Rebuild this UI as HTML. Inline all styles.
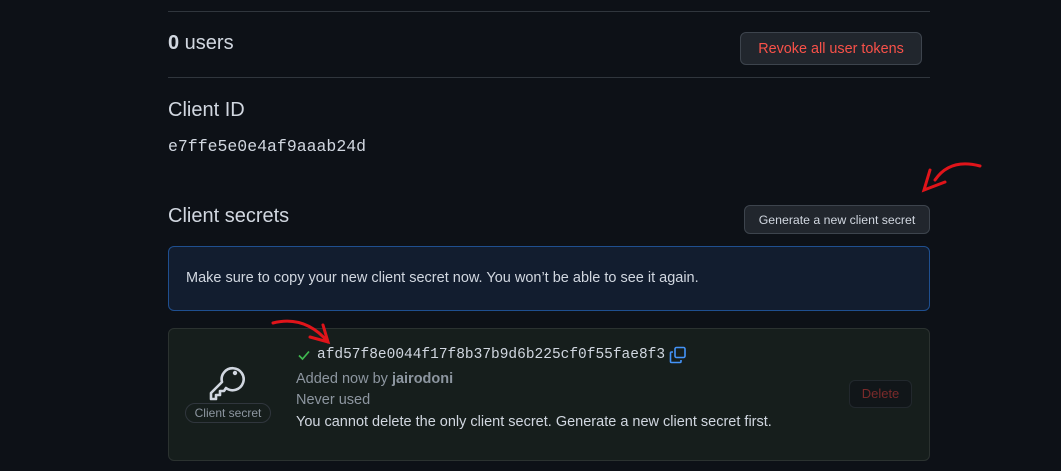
<!DOCTYPE html>
<html><head><meta charset="utf-8"><style>
*{box-sizing:border-box;margin:0;padding:0}
body{width:1061px;height:471px;background:#0d1117;font-family:"Liberation Sans",sans-serif;color:#d1d7e0;position:relative;overflow:hidden}
.abs{position:absolute}
.line{position:absolute;left:168px;width:762px;height:1px;background:#30363d}
.btn{position:absolute;border:1px solid #3d444d;background:#21262d;border-radius:6px;font-size:14.4px;display:flex;align-items:center;justify-content:center}
.mono{font-family:"Liberation Mono",monospace}
</style></head><body>
<div class="line" style="top:11px"></div>
<div class="abs" style="left:168px;top:32px;font-size:20px"><b>0</b> users</div>
<div class="btn" style="left:740px;top:32px;width:182px;height:33px;color:#f85149">Revoke all user tokens</div>
<div class="line" style="top:77px"></div>
<div class="abs" style="left:168px;top:99px;font-size:20px">Client ID</div>
<div class="abs mono" style="left:168px;top:137px;font-size:16.5px">e7ffe5e0e4af9aaab24d</div>
<div class="abs" style="left:168px;top:205px;font-size:20px">Client secrets</div>
<div class="btn" style="left:744px;top:205px;width:186px;height:29px;font-size:12.3px;color:#d1d7e0">Generate a new client secret</div>
<div class="abs" style="left:168px;top:246px;width:762px;height:65px;background:#121d2f;border:1px solid #1f4f8f;border-radius:6px"></div>
<div class="abs" style="left:186px;top:270px;font-size:14.5px">Make sure to copy your new client secret now. You won’t be able to see it again.</div>
<div class="abs" style="left:168px;top:328px;width:762px;height:133px;background:#161e1c;border:1px solid #2b3230;border-radius:6px"></div>
<svg class="abs" style="left:208px;top:362px" width="38" height="40" viewBox="0 0 38 40" fill="none" stroke="#d1d7e0" stroke-width="2.6" stroke-linejoin="round">
<path d="M14 20 L3 31 L3 37 L8 37 L8 33 L12 33 L12 29 L16 29 L18 26 A11 11 0 1 0 14 20 Z"/><circle cx="27" cy="11" r="2.2" fill="#d1d7e0" stroke="none"/></svg>
<div class="abs" style="left:185px;top:403px;width:86px;height:20px;border:1px solid #30363d;border-radius:10px;font-size:12px;color:#8d96a0;text-align:center;line-height:18px">Client secret</div>
<svg class="abs" style="left:297px;top:348px" width="14" height="14" viewBox="0 0 14 14"><path d="M2 7.5 L5.5 11 L12 3.5" stroke="#3fb950" stroke-width="1.7" fill="none"/></svg>
<div class="abs mono" style="left:317px;top:347px;font-size:14.5px">afd57f8e0044f17f8b37b9d6b225cf0f55fae8f3</div>
<svg class="abs" style="left:669px;top:346px" width="18" height="18" viewBox="0 0 18 18" fill="none" stroke="#4493f8" stroke-width="1.6"><rect x="6" y="1.5" width="10" height="10" rx="1.5"/><path d="M4 6 H2.5 Q1.5 6 1.5 7 V15.5 Q1.5 16.5 2.5 16.5 H11 Q12 16.5 12 15.5 V14"/></svg>
<div class="abs" style="left:296px;top:371px;font-size:14.5px;color:#8d96a0">Added now by <b style="color:#8d96a0">jairodoni</b></div>
<div class="abs" style="left:296px;top:392px;font-size:14.5px;color:#8d96a0">Never used</div>
<div class="abs" style="left:296px;top:414px;font-size:14.5px">You cannot delete the only client secret. Generate a new client secret first.</div>
<div class="abs" style="left:849px;top:380px;width:63px;height:28px;background:#111619;border:1px solid #22282d;border-radius:6px;color:#7a2a2a;font-size:13px;text-align:center;line-height:26px">Delete</div>
<svg class="abs" style="left:0;top:0" width="1061" height="471" fill="none" stroke="#e0141a" stroke-width="3" stroke-linecap="round">
<path d="M980 166 Q950 158 935 180 M930 170 L924 190 L945 182"/>
<path d="M273 323 Q305 315 328 342 M323 325 L328 342 L310 337"/>
</svg>
</body></html>
